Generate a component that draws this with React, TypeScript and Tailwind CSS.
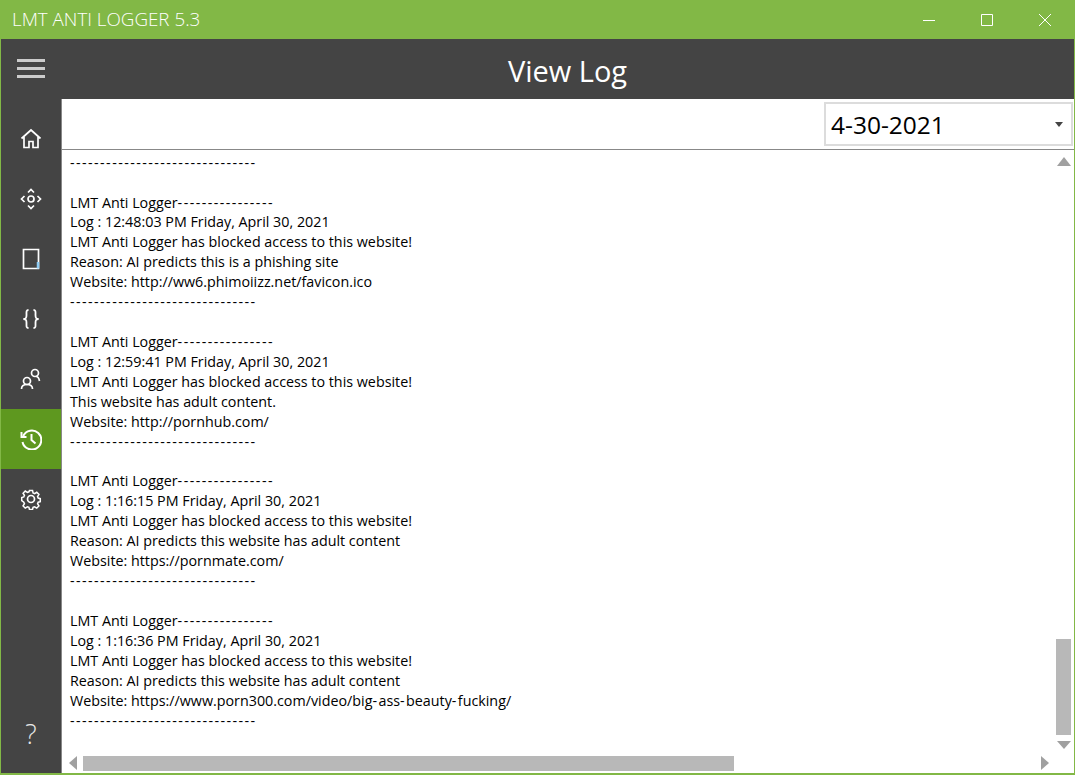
const logLines = [
  "-------------------------------",
  "",
  "LMT Anti Logger----------------",
  "Log : 12:48:03 PM Friday, April 30, 2021",
  "LMT Anti Logger has blocked access to this website!",
  "Reason: AI predicts this is a phishing site",
  "Website: http://ww6.phimoiizz.net/favicon.ico",
  "-------------------------------",
  "",
  "LMT Anti Logger----------------",
  "Log : 12:59:41 PM Friday, April 30, 2021",
  "LMT Anti Logger has blocked access to this website!",
  "This website has adult content.",
  "Website: http://pornhub.com/",
  "-------------------------------",
  "",
  "LMT Anti Logger----------------",
  "Log : 1:16:15 PM Friday, April 30, 2021",
  "LMT Anti Logger has blocked access to this website!",
  "Reason: AI predicts this website has adult content",
  "Website: https://pornmate.com/",
  "-------------------------------",
  "",
  "LMT Anti Logger----------------",
  "Log : 1:16:36 PM Friday, April 30, 2021",
  "LMT Anti Logger has blocked access to this website!",
  "Reason: AI predicts this website has adult content",
  "Website: https://www.porn300.com/video/big-ass-beauty-fucking/",
  "-------------------------------",
];

const icons = [
  <path key="home" d="M1.500 10.500 11 2l9.500 8.500M4 8.500V19.500H9v-6h4v6h5V8.500" />,
  <g key="move">
    <circle cx="11" cy="11" r="3" />
    <path d="M8 4.500 11 1.500l3 3M8 17.500l3 3 3-3M4.500 8l-3 3 3 3M17.500 8l3 3-3 3" />
  </g>,
  <g key="book">
    <path d="M3.500 1.500H18.500V20.500H3.500Z" />
    <path d="M18 14v6.500" stroke="#8fcdf5" strokeWidth="2.500" />
  </g>,
  <path key="braces" strokeWidth="1.800" d="M8.500 2C6 2 6.500 4 6.500 7S6 10.500 3.500 11c2.500.5 3 1 3 4S6 20 8.500 20M13.500 2C16 2 15.500 4 15.500 7s.5 3.500 3 4c-2.500.5-3 1-3 4s.5 5-2 5" />,
  <g key="people">
    <circle cx="7" cy="13" r="3.500" />
    <path d="M1.500 21c0-3 2.500-4.500 5.500-4.500s5.500 1.500 5.500 4.500" />
    <circle cx="15" cy="5" r="3.500" />
    <path d="M16 8.500c2 0 3 1.500 3.500 4.500" />
  </g>,
  <g key="history" strokeWidth="2">
    <path d="M3.200 8A9.500 9.500 0 1 1 2.500 14" />
    <path d="M1.500 4v5h5" />
    <path d="M11.500 6v6l4 3.500" />
  </g>,
  <g key="gear">
    <circle cx="11" cy="11" r="3.500" />
    <path d="M9.300 1.500h3.400l.6 2.800 1.700.7 2.400-1.500 2.400 2.400-1.500 2.400.7 1.700 2.300.6v3.400l-2.300.6-.7 1.700 1.500 2.400-2.400 2.400-2.400-1.500-1.700.7-.6 2.300H9.300l-.6-2.300-1.700-.7-2.400 1.500-2.400-2.400 1.500-2.400-.7-1.700L.7 12.700V9.300l2.300-.6.7-1.700L2.200 4.600l2.400-2.400L7 3.700l1.700-.7Z" transform="translate(1.100 1.100) scale(.9)" />
  </g>,
];

// the hyphens in the reference font are wider than in Open Sans
const LogLine = ({ text }: { text: string }) => (
  <>
    {text.split(/(-+)/).map((part, i) =>
      part.startsWith("-") ? (
        <span key={i} className="tracking-[1.420px]">
          {part}
        </span>
      ) : (
        <span key={i}>{part}</span>
      )
    )}
  </>
);

export default function App() {
  return (
    <div
      className="w-[1075px] h-[775px] flex flex-col bg-[#82b846] overflow-hidden"
      style={{ fontFamily: '"Open Sans", "Noto Sans", sans-serif' }}
    >
      <div className="h-[39px] flex items-center justify-between shrink-0 text-white">
        <span className="pl-3 text-[18.800px] font-light">LMT ANTI LOGGER 5.3</span>
        <div className="flex items-center pr-[24px] gap-[46px]">
          <svg width="12" height="12" viewBox="0 0 12 12" stroke="white" fill="none">
            <path d="M0 6.500h12" />
          </svg>
          <svg width="12" height="12" viewBox="0 0 12 12" stroke="white" fill="none">
            <path d="M.5.500h11v11H.5Z" />
          </svg>
          <svg width="12" height="12" viewBox="0 0 12 12" stroke="white" fill="none">
            <path d="M0 0l12 12M12 0 0 12" />
          </svg>
        </div>
      </div>

      <div className="flex-1 flex flex-col ml-px mr-px mb-[2px] min-h-0">
        <div className="h-[60px] shrink-0 bg-[#444444] flex items-center">
          <div className="w-[60px] pl-4 flex flex-col gap-[5px] pb-px">
            <div className="w-[28px] h-[3px] bg-[#cccccc]" />
            <div className="w-[28px] h-[3px] bg-[#cccccc]" />
            <div className="w-[28px] h-[3px] bg-[#cccccc]" />
          </div>
          <div className="flex-1 text-center text-white text-[29px] pt-[3px]">View Log</div>
        </div>

        <div className="flex-1 flex min-h-0">
          <div className="w-[60px] shrink-0 bg-[#444444] flex flex-col pt-[10px] pb-[26px]">
            {icons.map((icon, i) => (
              <div
                key={i}
                className={`h-[60px] flex items-center justify-center ${i === 5 ? "bg-[#5e981f]" : ""}`}
              >
                <svg
                  width="22"
                  height="22"
                  viewBox="0 0 22 22"
                  fill="none"
                  stroke="white"
                  strokeWidth="1.700"
                >
                  {icon}
                </svg>
              </div>
            ))}
            <div className="mt-auto text-center text-[#e8e8e8] text-[27px] font-light leading-none">?</div>
          </div>

          <div className="flex-1 flex flex-col min-w-0 bg-white border-l border-[#888888]">
            <div className="h-[51px] shrink-0 flex justify-end items-center border-b border-[#888888]">
              <div className="w-[249px] h-[44px] mr-px border-2 border-[#dcdcdc] flex items-center justify-between pl-[5px] pr-[8px] text-[24.500px] text-black">
                <span className="pt-[3px]">4-30-2021</span>
                <div className="w-0 h-0 border-x-[4.500px] border-x-transparent border-t-[5px] border-t-[#444444]" />
              </div>
            </div>

            <div className="flex-1 flex min-h-0">
              <div className="flex-1 flex flex-col min-w-0">
                <div className="flex-1 overflow-hidden pl-2 pt-[2.700px] text-[14.300px] leading-[19.930px] text-black whitespace-pre">
                  {logLines.map((line, i) => (
                    <div key={i} className="h-[19.930px]">
                      <LogLine text={line} />
                    </div>
                  ))}
                </div>
                <div className="h-[18px] shrink-0 flex items-start pl-[7px] pt-px">
                  <div className="w-0 h-0 border-y-[7.500px] border-y-transparent border-r-[8px] border-r-[#a0a0a0]" />
                  <div className="ml-[6px] w-[651px] h-[15px] bg-[#b8b8b8]" />
                  <div className="ml-[307px] w-0 h-0 border-y-[7.500px] border-y-transparent border-l-[8px] border-l-[#a0a0a0]" />
                </div>
              </div>
              <div className="w-[15px] shrink-0 flex flex-col items-center mr-[3px] ml-[3px]">
                <div className="mt-[7px] w-0 h-0 border-x-[7.500px] border-x-transparent border-b-[9px] border-b-[#a0a0a0]" />
                <div className="mt-[473px] w-[15px] h-[96px] bg-[#b8b8b8]" />
                <div className="mt-[6px] w-0 h-0 border-x-[7.500px] border-x-transparent border-t-[8px] border-t-[#a0a0a0]" />
              </div>
            </div>
          </div>
        </div>
      </div>
    </div>
  );
}
